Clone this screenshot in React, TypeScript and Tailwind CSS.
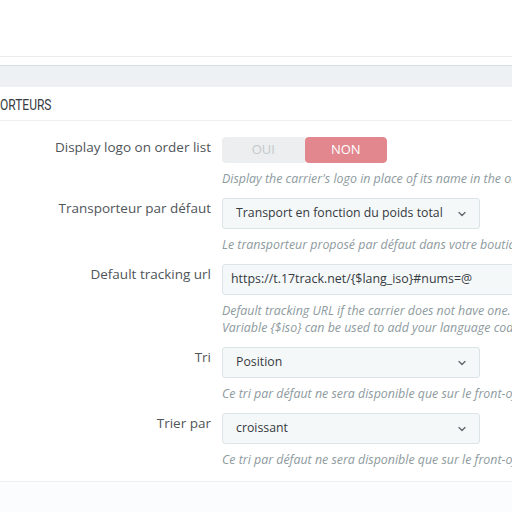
import { ChevronDown } from 'lucide-react'

const help = 'text-[12.4px] italic leading-[17px] text-[#8d9a9e] whitespace-nowrap mt-[7px]'

function Label({ children }: { children: string }) {
  return (
    <div className="w-[211px] shrink-0 text-right text-[13.5px] leading-5 text-[#505559]">
      {children}
    </div>
  )
}

function Select({ value }: { value: string }) {
  return (
    <div className="w-[258px] h-[31px] flex items-center justify-between pl-[13px] pr-[11px] bg-[#f5f8f9] border border-[#dbe4e7] rounded-[3px] text-[12.3px] text-[#363a41]">
      <span>{value}</span>
      <ChevronDown className="size-[12px] text-[#5f676c]" strokeWidth={2.6} />
    </div>
  )
}

function Row({ label, children }: { label: string; children: React.ReactNode }) {
  return (
    <div className="flex gap-[11px]">
      <Label>{label}</Label>
      <div className="flex flex-col min-w-0">{children}</div>
    </div>
  )
}

export default function App() {
  return (
    <div className="w-[512px] h-[512px] overflow-hidden bg-white flex flex-col" style={{ fontFamily: '"Open Sans", sans-serif' }}>
      <div className="h-[57px] shrink-0 border-b border-[#e9ecee]" />
      <div className="h-[8px] shrink-0" />
      <div className="h-[22px] shrink-0 bg-[#eef1f3] border-t border-[#d9e0e3]" />
      <div className="h-[34px] shrink-0 flex items-center pt-[3px] border-b border-[#eef0f1]">
        <span className="block origin-left scale-x-[0.8] text-[15px] text-[#363a41]" style={{ fontFamily: 'Roboto, sans-serif' }}>
          ORTEURS
        </span>
      </div>

      <div className="flex flex-col gap-[11px] pt-[16px]">
        <Row label="Display logo on order list">
          <div className="flex w-[165px] h-[26px] rounded-[4px] overflow-hidden text-[13px] uppercase">
            <div className="flex-1 flex items-center justify-center bg-[#eceeef] text-[#c3c9cc]">Oui</div>
            <div className="flex-1 flex items-center justify-center bg-[#e2878e] text-white rounded-[4px]">Non</div>
          </div>
          <div className={help}>Display the carrier's logo in place of its name in the order list</div>
        </Row>

        <Row label="Transporteur par défaut">
          <Select value="Transport en fonction du poids total" />
          <div className={help}>Le transporteur proposé par défaut dans votre boutique</div>
        </Row>

        <Row label="Default tracking url">
          <div className="w-[300px] h-[31px] flex items-center pl-[8px] bg-[#f5f8f9] border border-[#dbe4e7] rounded-[3px] text-[12.4px] text-[#363a41] whitespace-nowrap">
            https://t.17track.net/{'{'}$lang_iso{'}'}#nums=@
          </div>
          <div className={help}>
            Default tracking URL if the carrier does not have one.
            <br />
            Variable {'{'}$iso{'}'} can be used to add your language code
          </div>
        </Row>

        <Row label="Tri">
          <Select value="Position" />
          <div className={help}>Ce tri par défaut ne sera disponible que sur le front-office</div>
        </Row>

        <Row label="Trier par">
          <Select value="croissant" />
          <div className={help}>Ce tri par défaut ne sera disponible que sur le front-office</div>
        </Row>
      </div>

      <div className="mt-[13px] flex-1 bg-[#fafcfd] border-t border-[#eef1f2]" />
    </div>
  )
}
